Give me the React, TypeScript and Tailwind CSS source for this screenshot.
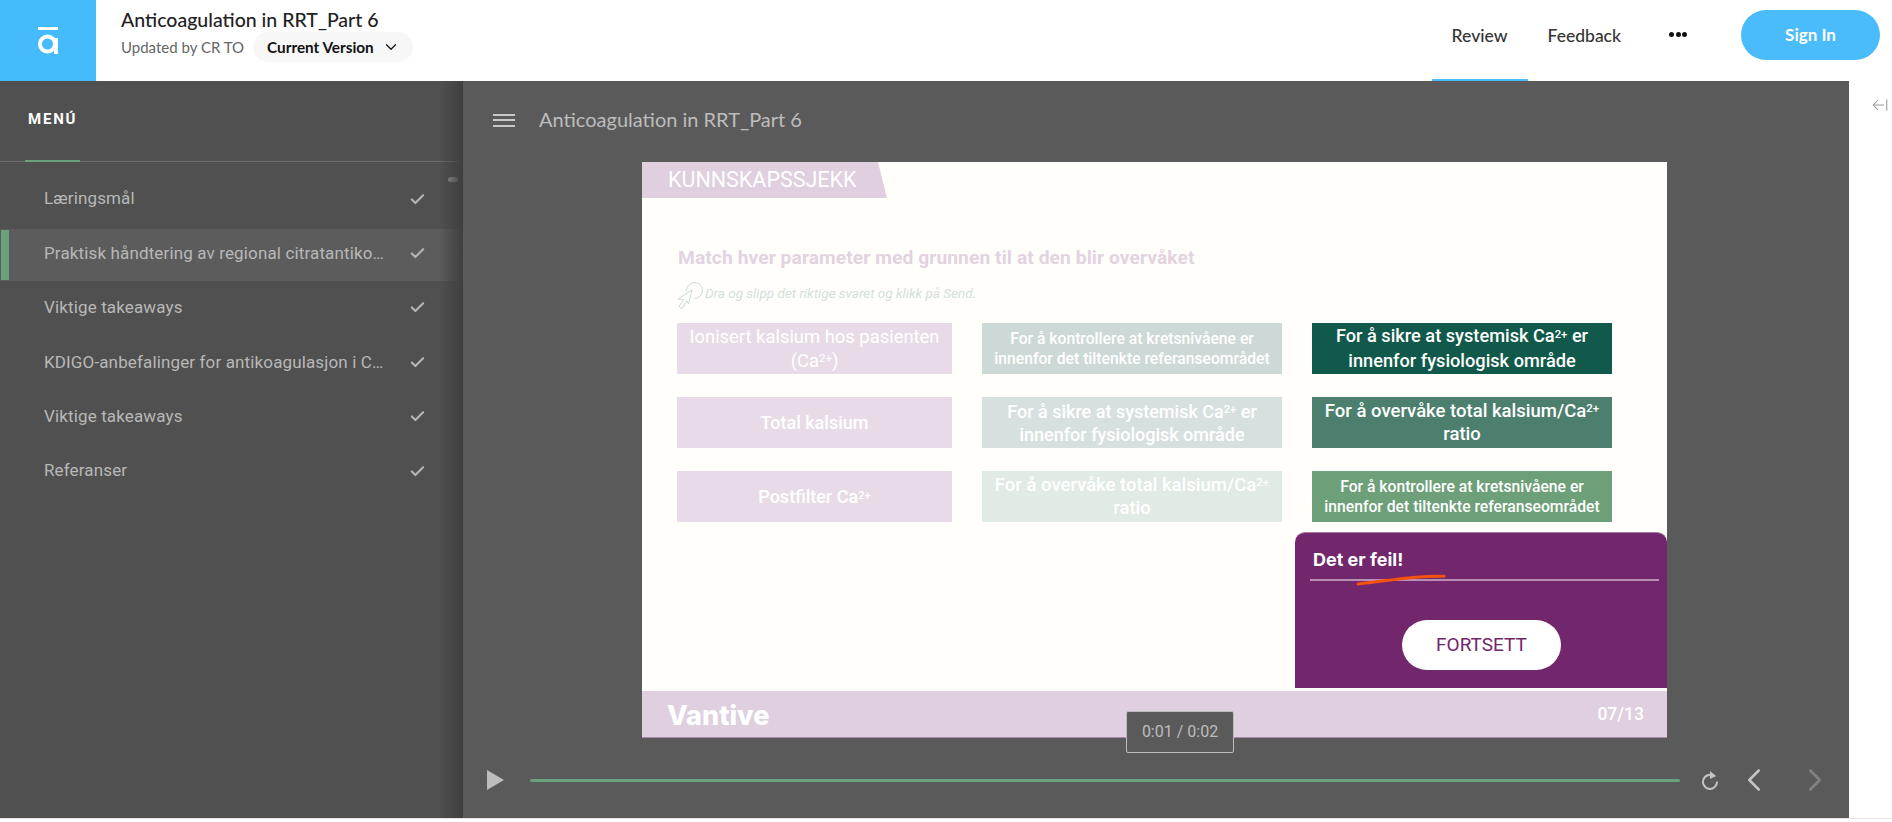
import React from 'react'
import { ArrowLeftFromLine, Check, ChevronDown, ChevronLeft, ChevronRight } from 'lucide-react'

const menuItems = [
    { title: 'Læringsmål' },
    { title: 'Praktisk håndtering av regional citratantikoagulasjon', active: true },
    { title: 'Viktige takeaways' },
    { title: 'KDIGO-anbefalinger for antikoagulasjon i CRRT' },
    { title: 'Viktige takeaways' },
    { title: 'Referanser' },
];

const Sup = () => <sup className="text-[0.62em] align-baseline relative -top-[0.4em]">2+</sup>;

const Box = ({ className, children }: { className: string; children: React.ReactNode }) => (
    <div className={`flex items-center justify-center text-center text-white ${className}`}>
        <p>{children}</p>
    </div>
);

const TopBar = () => (
    <header className="flex h-[81px] shrink-0 items-stretch bg-white [font-family:Lato,sans-serif]">
        <div className="flex w-[96px] items-center justify-center bg-[#45bbfb]">
            <svg width="22" height="28" viewBox="0 0 22 28" fill="none">
                <rect x="1" y="0" width="20" height="3" fill="#fff" />
                <circle cx="10.5" cy="17" r="7.5" stroke="#fff" strokeWidth="4" />
                <rect x="17" y="11" width="4" height="16" fill="#fff" />
            </svg>
        </div>

        <div className="ml-[25px] flex flex-col pt-[6px]">
            <h1 className="text-[19.5px] font-medium leading-[28px] text-[#222]">Anticoagulation in RRT_Part 6</h1>
            <div className="-mt-[2px] flex items-center">
                <span className="text-[15px] text-[#666]">Updated by CR TO</span>
                <div className="ml-[9px] flex h-[30px] w-[160px] items-center gap-[8px] rounded-full bg-[#f7f7f7] pl-[14px] text-[15.3px] font-bold text-[#111]">
                    Current Version
                    <ChevronDown size={18} strokeWidth={1.6} />
                </div>
            </div>
        </div>

        <nav className="ml-auto flex items-start text-[17.5px] font-medium text-[#333]">
            <div className="relative h-full w-[96px] pt-[23px] text-center">
                Review
                <div className="absolute bottom-0 left-0 h-[2px] w-full bg-[#4abcfa]" />
            </div>
            <span className="ml-[20px] mt-[23px]">Feedback</span>
            <div className="ml-[48px] mt-[32px] flex gap-[1.5px]">
                <div className="size-[5px] rounded-full bg-[#111]" />
                <div className="size-[5px] rounded-full bg-[#111]" />
                <div className="size-[5px] rounded-full bg-[#111]" />
            </div>
            <button className="ml-[54px] mr-[12px] mt-[10px] h-[50px] w-[139px] rounded-full bg-[#4abcfb] text-[17px] font-bold text-white">
                Sign In
            </button>
        </nav>
    </header>
);

const Sidebar = () => (
    <aside className="relative flex w-[463px] shrink-0 flex-col bg-[#505050] [font-family:Roboto,sans-serif]">
        <div className="relative h-[81px] border-b border-[#6d6d6d]">
            <span className="absolute left-[28px] top-[27px] text-[15px] font-bold tracking-[0.12em] text-white">MENÚ</span>
            <div className="absolute -bottom-px left-[25px] h-[2px] w-[55px] bg-[#6aa07b]" />
        </div>

        <div className="absolute right-[5px] top-[96px] h-[5px] w-[10px] rounded-full bg-[#999]" />

        <ul className="pt-[10px]">
            {menuItems.map((item, i) => (
                <li key={i} className="relative flex h-[54.4px] items-center pl-[44px] pr-[37px] text-[17px] text-[#b8b8b8]">
                    {item.active && (
                        <>
                            <div className="absolute bottom-0 left-0 right-[3px] top-[3px] bg-[#5c5c5c]" />
                            <div className="absolute bottom-[1px] left-[1px] top-[4px] w-[8px] bg-[#6aa07b]" />
                        </>
                    )}
                    <span className="relative w-[344px] truncate tracking-[0.008em]">{item.title}</span>
                    <Check className="relative ml-auto text-[#b5b5b5]" size={17} strokeWidth={3} />
                </li>
            ))}
        </ul>

        <div className="pointer-events-none absolute bottom-0 right-0 top-0 w-[24px] bg-gradient-to-r from-transparent to-[#3f3f3f]" />
    </aside>
);

const Slide = () => (
    <div className="relative flex h-[576px] w-[1025px] flex-col overflow-hidden border-b border-[#a98ba8] bg-[#fffefa] [font-family:Roboto,sans-serif]">
        <div className="flex h-[36px] w-[245px] items-center bg-[#e0cfdf] pl-[26px] text-[21.5px] text-white [clip-path:polygon(0_0,236px_0,100%_100%,0_100%)]">
            KUNNSKAPSSJEKK
        </div>

        <div className="flex-1 pl-[35px]">
            <h2 className="ml-[1px] mt-[48px] text-[19.2px] font-bold leading-[24px] tracking-[0.005em] text-[#e3d2e1]">
                Match hver parameter med grunnen til at den blir overvåket
            </h2>

            <div className="mt-[9px] flex h-[32px] items-center">
                <svg width="26" height="32" viewBox="0 0 26 32" fill="none" stroke="#cddbd6" strokeWidth="1">
                    <path d="M9.5 12a8 8 0 1 1 8 7.5" />
                    <path d="M15 11 11.5 25 9.5 22 5 30 2 27 7 21 1 20Z" />
                </svg>
                <span className="relative -top-[2px] ml-[2px] text-[13.5px] italic text-[#d3e0db]">Dra og slipp det riktige svaret og klikk på Send.</span>
            </div>

            <div className="mt-[12px] grid grid-cols-[275px_300px_300px] grid-rows-[51px_51px_51px] gap-x-[30px] gap-y-[23px]">
                <Box className="bg-[#e8dbe7] text-[18.4px] leading-[24px]">Ionisert kalsium hos pasienten (Ca<Sup />)</Box>
                <Box className="bg-[#cdd9d6] px-[8px] text-[15.7px] font-medium leading-[20px]">For å kontrollere at kretsnivåene er innenfor det tiltenkte referanseområdet</Box>
                <Box className="bg-[#11594a] px-[8px] text-[18.2px] font-medium leading-[24.5px]">For å sikre at systemisk Ca<Sup /> er innenfor fysiologisk område</Box>

                <Box className="bg-[#e8dbe7] text-[18px] font-medium">Total kalsium</Box>
                <Box className="bg-[#d6e1df] px-[8px] text-[18px] font-medium leading-[23px]">For å sikre at systemisk Ca<Sup /> er innenfor fysiologisk område</Box>
                <Box className="bg-[#4c7f6e] px-[8px] text-[18.5px] font-medium leading-[23px]">For å overvåke total kalsium/Ca<Sup /> ratio</Box>

                <Box className="bg-[#e8dbe7] text-[18px] font-medium">Postfilter Ca<Sup /></Box>
                <Box className="bg-[#e0ebe5] px-[8px] text-[18.5px] font-medium leading-[23px]">For å overvåke total kalsium/Ca<Sup /> ratio</Box>
                <Box className="bg-[#6da078] px-[8px] text-[15.7px] font-medium leading-[20px]">For å kontrollere at kretsnivåene er innenfor det tiltenkte referanseområdet</Box>
            </div>
        </div>

        <footer className="flex h-[46px] items-center justify-between bg-[#e0cfdf] pl-[25px] pr-[23px] text-white">
            <span className="relative top-[1px] text-[27px] font-extrabold leading-none [font-family:Inter,sans-serif]">Vantive</span>
            <span className="text-[17.5px] font-medium">07/13</span>
        </footer>

        <div className="absolute bottom-[49px] right-0 h-[156px] w-[372px] rounded-t-[10px] border-t border-[#a87aa4] bg-[#72266b]">
            <p className="pl-[18px] pt-[15px] text-[18px] font-bold leading-[24px] text-white [font-family:Inter,sans-serif]">Det er feil!</p>
            <div className="ml-[15px] mt-[7px] h-[2px] w-[349px] bg-[#b88fb3]" />
            <svg className="absolute left-[60px] top-[38px]" width="92" height="16" viewBox="0 0 92 16" fill="none">
                <path d="M3 13C30 10 55 6 72 5.500 78 5.300 84 5.200 89 5.300" stroke="#f4520d" strokeWidth="3" strokeLinecap="round" />
            </svg>
            <button className="absolute left-[107px] top-[87px] h-[50px] w-[159px] rounded-full bg-white text-[19px] text-[#72266b]">
                FORTSETT
            </button>
        </div>
    </div>
);

const Player = () => (
    <main className="relative flex min-w-0 flex-1 flex-col bg-[#5a5a5a]">
        <div className="flex h-[81px] items-center pb-[3px] pl-[30px]">
            <div className="flex w-[22px] flex-col gap-[3.500px]">
                <div className="h-[2px] bg-[#c8c8c8]" />
                <div className="h-[2px] bg-[#c8c8c8]" />
                <div className="h-[2px] bg-[#c8c8c8]" />
            </div>
            <span className="-mt-[2px] ml-[24px] text-[20px] text-[#bdbdbd] [font-family:Lato,sans-serif]">Anticoagulation in RRT_Part 6</span>
        </div>

        <div className="pl-[179px]">
            <Slide />
        </div>

        <div className="mt-[22px] flex h-[40px] items-center pl-[24px]">
            <svg width="18" height="20" viewBox="0 0 18 20"><path d="M0 0 17 10 0 20Z" fill="#bdbdbd" /></svg>
            <div className="ml-[25px] h-[3px] w-[1150px] rounded-full bg-[#6aa07b]" />
            <svg className="ml-[21px]" width="18" height="20" viewBox="0 0 18 20" fill="none">
                <path d="M13.500 6.500A7 7 0 1 0 16 11.500" stroke="#c4c4c4" strokeWidth="2" />
                <path d="M9 1 15 6 9 9Z" fill="#c4c4c4" />
            </svg>
            <ChevronLeft className="ml-[16px] text-[#c4c4c4]" size={38} strokeWidth={1.6} />
            <ChevronRight className="ml-[23px] text-[#838383]" size={38} strokeWidth={1.6} />
        </div>

        <div className="absolute left-[663px] top-[630px] flex h-[42px] w-[108px] items-center justify-center rounded-[2px] border border-[#bdbdbd] bg-[#5a5a5a] text-[16px] text-[#bdbdbd] [font-family:Roboto,sans-serif]">
            0:01 / 0:02
        </div>
    </main>
);

const App = () => {
    return (
        <div className="flex h-[822px] w-full flex-col overflow-hidden bg-white">
            <TopBar />
            <div className="flex h-[738px] border-b border-[#e5e5e5]">
                <Sidebar />
                <Player />
                <div className="flex w-[43px] shrink-0 justify-end bg-white pr-[3px] pt-[15px]">
                    <ArrowLeftFromLine className="text-[#999]" size={18} strokeWidth={1.4} />
                </div>
            </div>
        </div>
    );
};

export default App;
